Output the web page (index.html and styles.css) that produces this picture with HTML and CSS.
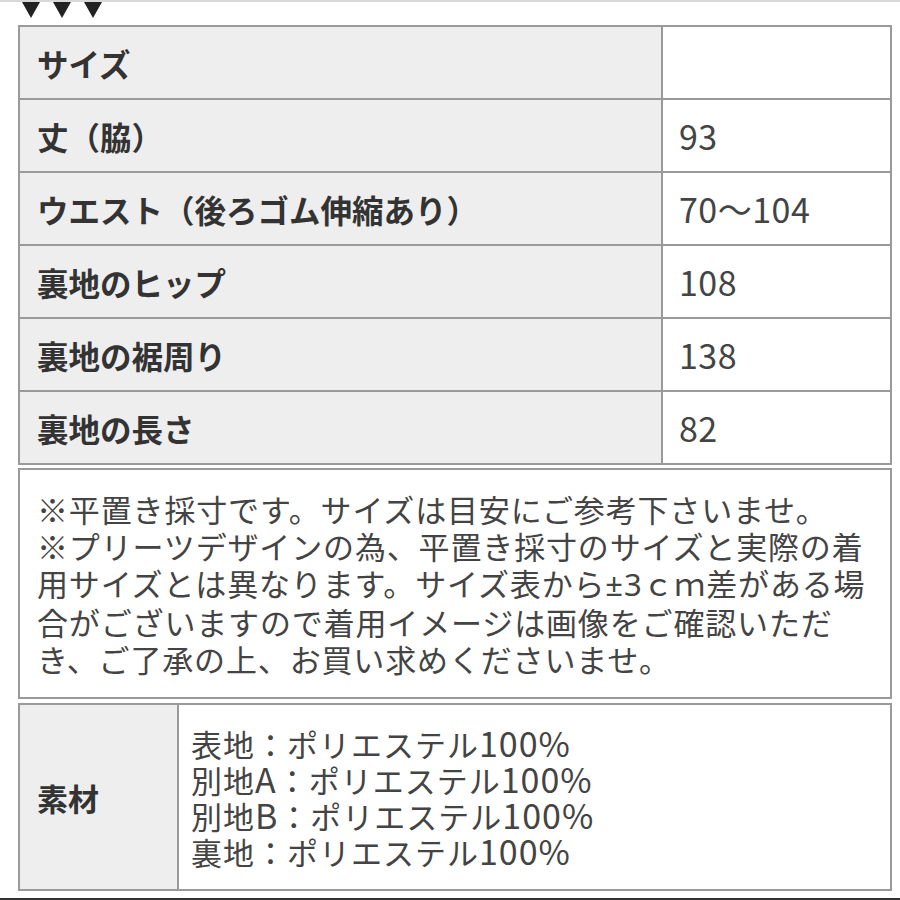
FILE: index.html
```html
<!DOCTYPE html>
<html lang="ja">
<head>
<meta charset="utf-8">
<title>サイズ表</title>
<link rel="stylesheet" href="styles.css">
</head>
<body>
<div class="topline"></div>
<div class="arrows">
  <svg class="tri" viewBox="0 0 18 17" width="18" height="17"><polygon points="0,0 18,0 9,16"/></svg>
  <svg class="tri" viewBox="0 0 18 17" width="18" height="17"><polygon points="0,0 18,0 9,16"/></svg>
  <svg class="tri" viewBox="0 0 18 17" width="18" height="17"><polygon points="0,0 18,0 9,16"/></svg>
</div>
<div class="sheet">
  <table class="size">
    <tr><th>サイズ</th><td></td></tr>
    <tr><th>丈（脇）</th><td>93</td></tr>
    <tr><th>ウエスト（後ろゴム伸縮あり）</th><td>70〜104</td></tr>
    <tr><th>裏地のヒップ</th><td>108</td></tr>
    <tr><th>裏地の裾周り</th><td>138</td></tr>
    <tr><th>裏地の長さ</th><td>82</td></tr>
  </table>
  <div class="notes">
    <p>※平置き採寸です。サイズは目安にご参考下さいませ。<br>※プリーツデザインの為、平置き採寸のサイズと実際の着用サイズとは異なります。サイズ表から<span class="half">±3</span>ｃｍ差がある場合がございますので着用イメージは画像をご確認いただき、ご了承の上、お買い求めくださいませ。</p>
  </div>
  <div class="material">
    <div class="mlabel">素材</div>
    <div class="mvalue">
      <div>表地：ポリエステル<span class="lat">100%</span></div>
      <div>別地<span class="lat">A</span>：ポリエステル<span class="lat">100%</span></div>
      <div>別地<span class="lat">B</span>：ポリエステル<span class="lat">100%</span></div>
      <div>裏地：ポリエステル<span class="lat">100%</span></div>
    </div>
  </div>
</div>
<div class="bottomline"></div>
</body>
</html>
```

FILE: styles.css
```css
html, body {
  margin: 0;
  padding: 0;
  background: #ffffff;
}
body {
  width: 900px;
  height: 900px;
  overflow: hidden;
  position: relative;
  font-family: "Noto Sans CJK JP", "Noto Sans", sans-serif;
  color: #444;
}
.topline {
  height: 2px;
  background: #d8d8d8;
}
.arrows {
  display: flex;
  gap: 13px;
  margin-left: 22px;
  height: 23px;
  margin-top: 0;
}
.tri {
  display: block;
  fill: #222;
}
.sheet {
  margin-left: 18px;
  width: 874px;
}
.size {
  border-collapse: separate;
  border-spacing: 0;
  border-top: 2px solid #9a9a9a;
  border-left: 2px solid #9a9a9a;
  width: 874px;
  table-layout: fixed;
}
.size th, .size td {
  height: 71px;
  padding: 0;
  border-right: 2px solid #9a9a9a;
  border-bottom: 2px solid #9a9a9a;
  line-height: 40px;
  text-align: left;
  vertical-align: middle;
}
.size th {
  width: 624px;
  padding-left: 17px;
  background: #eeeeee;
  color: #333;
  font-size: 31.5px;
  font-weight: bold;
}
.size td {
  padding-left: 16px;
  color: #444;
  font-size: 34px;
  letter-spacing: 0.5px;
  font-weight: normal;
}
.notes {
  margin-top: 3px;
  border: 2px solid #9a9a9a;
  height: 227px;
  box-sizing: content-box;
  padding: 0 8px 0 17px;
  display: flex;
  align-items: center;
}
.notes p {
  margin: 0;
  font-size: 31px;
  line-height: 37px;
  letter-spacing: 0.85px;
  color: #444;
}
.half {
  font-family: "Noto Sans", sans-serif;
}
.material {
  margin-top: 4px;
  border: 2px solid #9a9a9a;
  height: 184px;
  display: flex;
}
.mlabel {
  width: 140px;
  padding-left: 17px;
  background: #eeeeee;
  border-right: 2px solid #9a9a9a;
  display: flex;
  align-items: center;
  font-size: 31px;
  font-weight: bold;
  color: #333;
}
.mvalue {
  padding-left: 12px;
  display: flex;
  flex-direction: column;
  justify-content: center;
  font-size: 31px;
  line-height: 36px;
  letter-spacing: 1px;
  color: #444;
}
.mvalue div {
  height: 36px;
}
.lat {
  font-size: 34px;
  line-height: 36px;
}
.bottomline {
  position: absolute;
  left: 0;
  right: 0;
  bottom: 0;
  height: 2px;
  background: #333;
}
```
